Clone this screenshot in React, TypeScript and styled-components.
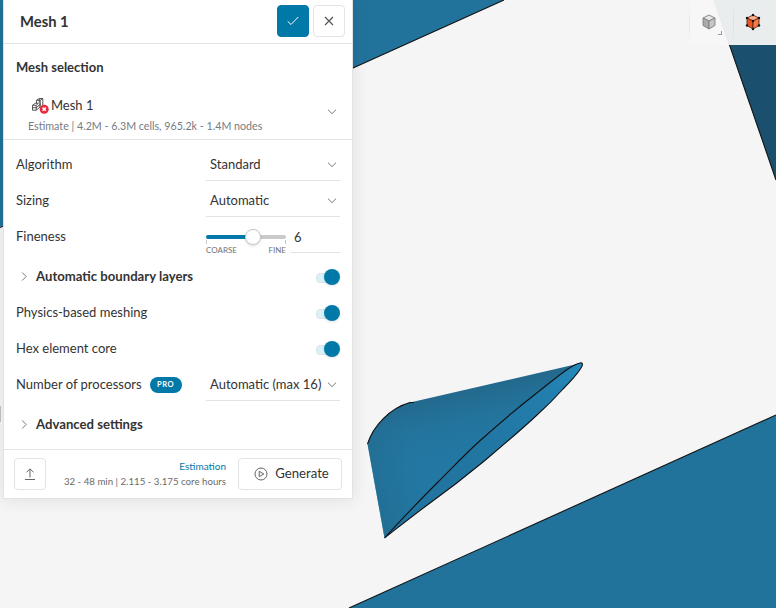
import React from "react";
import styled, { createGlobalStyle } from "styled-components";

const GlobalStyle = createGlobalStyle`
  * { box-sizing: border-box; }
  body { margin: 0; overflow: hidden; background: #f5f5f5; }
  button { font: inherit; padding: 0; color: inherit; }
  svg { flex: none; }
`;

const Viewport = styled.main`
  position: relative;
  width: 776px;
  height: 608px;
  overflow: hidden;
  padding-left: 3px;
  background: #f5f5f5;
  font-family: Lato, "Liberation Sans", sans-serif;
  color: #333;
`;

const SceneSvg = styled.svg`
  position: absolute;
  inset: 0;
`;

const EdgeHandle = styled.div`
  position: absolute;
  left: 0;
  top: 406px;
  width: 1px;
  height: 16px;
  background: #c4c4c4;
`;

const ViewTools = styled.div`
  position: absolute;
  top: 0;
  right: 0;
  width: 87px;
  height: 45px;
  display: flex;
  background: rgba(246, 246, 246, 0.94);
`;

const ViewTool = styled.button`
  position: relative;
  width: 44px;
  height: 45px;
  display: grid;
  place-items: center;
  padding: 0 3px 1px 0;
  border: 0;
  background: linear-gradient(rgba(0, 0, 0, 0), rgba(0, 0, 0, 0.06) 50%, rgba(0, 0, 0, 0)) 0 0 / 1px 100% no-repeat;
`;

const Panel = styled.section`
  position: relative;
  width: 350px;
  height: 499px;
  display: flex;
  flex-direction: column;
  background: #fff;
  border: 1px solid #e2e3e4;
  border-top: 0;
  box-shadow: 0 1px 16px rgba(0, 0, 0, 0.09);
`;

const Header = styled.header`
  flex: none;
  height: 44px;
  display: flex;
  align-items: center;
  gap: 4px;
  padding: 0 7px 2px 16px;
  border-bottom: 1px solid #e2e3e4;
`;

const Title = styled.h1`
  flex: 1;
  margin: 0;
  font-size: 14.8px;
  font-weight: 700;
`;

const SquareButton = styled.button<{ $primary?: boolean }>`
  flex: none;
  width: 32px;
  height: 32px;
  display: grid;
  place-items: center;
  border-radius: 4px;
  border: 1px solid ${(p) => (p.$primary ? "#0079a8" : "#e2e3e4")};
  background: ${(p) => (p.$primary ? "#0079a8" : "#fff")};
`;

const Selection = styled.section`
  flex: none;
  height: 96px;
  padding: 14px 12px 0 12px;
  border-bottom: 1px solid #e2e3e4;
`;

const SectionTitle = styled.h2`
  margin: 0;
  font-size: 13px;
  line-height: 18px;
  font-weight: 700;
`;

const MeshChoice = styled.div`
  display: flex;
  align-items: flex-start;
  justify-content: space-between;
  margin-top: 18px;
  padding: 0 3px 0 12px;
  height: 44px;

  > svg {
    margin-top: 12px;
  }
`;

const MeshName = styled.div`
  display: flex;
  align-items: center;
  height: 22px;
  padding-left: 3px;
  gap: 2px;
  font-size: 13px;
`;

const MeshEstimate = styled.div`
  height: 22px;
  line-height: 20px;
  font-size: 10.7px;
  color: #747c82;
`;

const Settings = styled.div`
  flex: 1;
  padding: 6px 12px 0;
`;

const Row = styled.div<{ $spaced?: boolean }>`
  display: flex;
  align-items: center;
  height: 36px;
  margin-top: ${(p) => (p.$spaced ? 4 : 0)}px;
`;

const Label = styled.div<{ $strong?: boolean }>`
  flex: 1;
  display: flex;
  align-items: center;
  font-size: ${(p) => (p.$strong ? 13.15 : 13)}px;
  font-weight: ${(p) => (p.$strong ? 700 : 400)};
  gap: 8px;
  white-space: nowrap;
`;

const Select = styled.div`
  width: 134px;
  height: 34px;
  display: flex;
  align-items: center;
  justify-content: space-between;
  padding: 0 3px 0 4px;
  border-bottom: 1px solid #e2e3e4;
  font-size: 13px;
  white-space: nowrap;
`;

const Slider = styled.div`
  width: 80px;
  height: 26px;
  margin: 12px 4px 0 0;
`;

const Track = styled.div`
  position: relative;
  height: 4px;
  margin-top: 6px;
  border-radius: 2px;
  background: linear-gradient(to right, #0079a8 47px, #cacaca 47px);
`;

const Thumb = styled.div`
  position: absolute;
  left: 39px;
  top: -6px;
  width: 16px;
  height: 16px;
  border: 1px solid #c8c8c8;
  border-radius: 50%;
  background: #fff;
  box-shadow: 0 1px 3px rgba(0, 0, 0, 0.14);
`;

const Ticks = styled.div`
  height: 4px;
  margin-top: 1px;
  border: solid #c8c8c8;
  border-width: 0 1px;
`;

const Ends = styled.div`
  display: flex;
  justify-content: space-between;
  margin-top: 1px;
  font-size: 8px;
  line-height: 10px;
  color: #717171;
`;

const NumberField = styled.div`
  width: 50px;
  height: 32px;
  margin-top: 2px;
  line-height: 33px;
  padding-left: 4px;
  border-bottom: 1px solid #e2e3e4;
  font-size: 13px;
`;

const Toggle = styled.div`
  width: 24px;
  height: 16px;
  display: flex;
  align-items: center;
  justify-content: flex-end;
  position: relative;
  margin-top: 2px;

  &::before {
    content: "";
    position: absolute;
    left: 0;
    top: 4px;
    width: 18px;
    height: 8px;
    border: 1px solid #dce4e6;
    border-radius: 4px;
    background: #d9f2fa;
  }
`;

const Knob = styled.div`
  position: relative;
  width: 16px;
  height: 16px;
  border-radius: 50%;
  background: #0079a8;
  box-shadow: 0 1px 3px rgba(0, 0, 0, 0.12);
`;

const Pro = styled.span`
  width: 32px;
  height: 16px;
  line-height: 16px;
  margin-top: 1px;
  border-radius: 8px;
  background: #0079a8;
  color: #fff;
  text-align: center;
  font-size: 7.5px;
  font-weight: 700;
  letter-spacing: 0.5px;
`;

const Footer = styled.footer`
  flex: none;
  height: 49px;
  display: flex;
  align-items: center;
  padding: 0 10px;
  border-top: 1px solid #e2e3e4;
`;

const Estimation = styled.div`
  flex: 1;
  padding-right: 12px;
  text-align: right;
  font-size: 9.7px;
  line-height: 15px;
  white-space: nowrap;
  color: #6b6b6b;
`;

const EstimationLink = styled.div`
  color: #0079a8;
  font-size: 10px;
`;

const Generate = styled.button`
  width: 104px;
  height: 32px;
  display: flex;
  align-items: center;
  justify-content: center;
  gap: 7px;
  border: 1px solid #e2e3e4;
  border-radius: 4px;
  background: #fff;
  font-size: 13.2px;
  line-height: 16px;
  padding: 0 0 2px 3px;

  svg {
    position: relative;
    top: 1px;
  }
`;

function Chevron({ right = false }: { right?: boolean }) {
  return (
    <svg width="10" height="10" viewBox="0 0 10 10" fill="none" stroke="#777">
      <path d={right ? "M3.2 1.5 7.2 5.5 3.2 9.5" : "M1 3.7 5 7.6 9 3.7"} />
    </svg>
  );
}

function MeshIcon() {
  return (
    <svg width="18" height="18" viewBox="0 0 18 18" fill="none" stroke="#444" strokeWidth=".9">
      <path d="M5.5 4.3 8.3 2.5H11.8V9.8L10 11.7M5.5 4.3H9.2L11.8 2.5M9.2 4.3V10.5M5.5 4.3V7.3M8.3 2.5V6.8M1.5 9.3 4.2 7.3H7.4L5.2 9.3H1.5V14.2H5.2V9.3M5.2 14.2 9 11V6.9M1.5 11.7H5.2L9 8.6" />
      <circle cx="13.2" cy="13.2" r="4.5" fill="#e6293e" stroke="none" />
      <path d="m11.6 11.6 3.2 3.2m0-3.2-3.2 3.2" stroke="#fff" strokeWidth="1.6" />
    </svg>
  );
}

function Cube({ selected = false }: { selected?: boolean }) {
  const faces = selected ? ["#ffaf87", "#e95420", "#f47b49"] : ["#e5e5e5", "#aaa", "#c5c5c5"];
  const corners = [[8, 1], [2, 4], [14, 4], [8, 7], [2, 11.5], [14, 11.5], [8, 15]];
  return (
    <svg width="18" height="18" viewBox="-1 -1 18 18" stroke={selected ? "#612a17" : "#808080"} strokeWidth=".9" strokeLinejoin="round">
      <path d="M8 1 14 4 8 7 2 4Z" fill={faces[0]} />
      <path d="M2 4 8 7V15L2 11.5Z" fill={faces[1]} />
      <path d="M14 4 8 7V15L14 11.5Z" fill={faces[2]} />
      {selected && corners.map(([x, y]) => <circle key={`${x}-${y}`} cx={x} cy={y} r="1.2" fill="#111" stroke="none" />)}
    </svg>
  );
}

const FLANK = "M384.5 538C400 521 418 502 438 482 453 467 466 453 483 438 501 422 520 406 538 392 555 379 569 366 580 363 583 362 583 365 581 368 576 376 570 382 563 389 555 398 547 406 537 415 520 431 502 446 483 462 466 476 448 490 430 503 415 514 400 526 384.5 538Z";

function Scene() {
  return (
    <SceneSvg width="776" height="608" viewBox="0 0 776 608">
      <defs>
        <linearGradient id="cone" gradientUnits="userSpaceOnUse" x1="465" y1="390" x2="478" y2="450">
          <stop stopColor="#23698d" />
          <stop offset=".5" stopColor="#23749d" />
          <stop offset="1" stopColor="#2278a3" />
        </linearGradient>
        <linearGradient id="coneLeft" gradientUnits="userSpaceOnUse" x1="370" y1="495" x2="420" y2="482">
          <stop stopColor="#236a8e" stopOpacity=".7" />
          <stop offset="1" stopColor="#236a8e" stopOpacity="0" />
        </linearGradient>
        <linearGradient id="flank" x1="1" y1="0" x2="0" y2="1">
          <stop stopColor="#258abb" />
          <stop offset=".18" stopColor="#227ead" />
          <stop offset=".5" stopColor="#2176a2" />
          <stop offset="1" stopColor="#22739e" />
        </linearGradient>
      </defs>
      <path d="M0 0H504L353 68 0 227Z" fill="#22739c" />
      <path d="M504 0 353 68 0 227.5" fill="none" stroke="#111" strokeWidth="1.1" />
      <path d="M714 0 776 180V0Z" fill="#1a506d" />
      <path d="M714 0 776 180" stroke="#111" strokeWidth="1.1" />
      <path d="M349 608 776 415V608Z" fill="#22739c" />
      <path d="M349 608 776 415" stroke="#111" strokeWidth="1.1" />
      <path d="M367.5 444C373 426 390 408 410 402.5L581.5 363 483 445 384.5 538Z" fill="url(#cone)" />
      <path d="M367.5 444C373 426 390 408 410 402.5L483 445 384.5 538Z" fill="url(#coneLeft)" />
      <path d={FLANK} fill="url(#flank)" />
      <g fill="none" stroke="#111" strokeWidth="1.1">
        <path d="M367.5 444C373 426 390 408 410 402.5H414" />
        <path d={FLANK} />
      </g>
    </SceneSvg>
  );
}

function SelectRow({ label, value, pro = false }: { label: string; value: string; pro?: boolean }) {
  return (
    <Row>
      <Label>{label}{pro && <Pro>PRO</Pro>}</Label>
      <Select>{value}<Chevron /></Select>
    </Row>
  );
}

function ToggleRow({ label, group = false }: { label: string; group?: boolean }) {
  return (
    <Row $spaced={group}>
      <Label $strong={group}>{group && <GroupChevron><Chevron right /></GroupChevron>}{label}</Label>
      <Toggle role="switch" aria-checked="true"><Knob /></Toggle>
    </Row>
  );
}

const GroupChevron = styled.span`
  width: 12px;
  display: flex;
  padding-left: 3px;
`;

const DropCorner = styled.span`
  position: absolute;
  right: 11px;
  bottom: 10px;
  width: 4px;
  height: 4px;
  border: solid #999;
  border-width: 0 1px 1px 0;
`;

export default function App() {
  return (
    <>
      <GlobalStyle />
      <Viewport>
        <Scene />
        <EdgeHandle />
        <ViewTools>
          <ViewTool aria-label="Display mode"><Cube /><DropCorner /></ViewTool>
          <ViewTool aria-label="Volume selection"><Cube selected /></ViewTool>
        </ViewTools>
        <Panel>
          <Header>
            <Title>Mesh 1</Title>
            <SquareButton $primary aria-label="Apply">
              <svg width="12" height="10" viewBox="0 0 12 10" fill="none" stroke="#fff"><path d="M.7 5.3 4 8.5 11.3 1" /></svg>
            </SquareButton>
            <SquareButton aria-label="Close">
              <svg width="10" height="10" viewBox="0 0 10 10" fill="none" stroke="#555" strokeWidth="1.2"><path d="m1 1 8 8m0-8L1 9" /></svg>
            </SquareButton>
          </Header>
          <Selection>
            <SectionTitle>Mesh selection</SectionTitle>
            <MeshChoice>
              <div>
                <MeshName><MeshIcon />Mesh 1</MeshName>
                <MeshEstimate>Estimate | 4.2M - 6.3M cells, 965.2k - 1.4M nodes</MeshEstimate>
              </div>
              <Chevron />
            </MeshChoice>
          </Selection>
          <Settings>
            <SelectRow label="Algorithm" value="Standard" />
            <SelectRow label="Sizing" value="Automatic" />
            <Row>
              <Label>Fineness</Label>
              <Slider>
                <Track><Thumb /></Track>
                <Ticks />
                <Ends><span>COARSE</span><span>FINE</span></Ends>
              </Slider>
              <NumberField>6</NumberField>
            </Row>
            <ToggleRow group label="Automatic boundary layers" />
            <ToggleRow label="Physics-based meshing" />
            <ToggleRow label="Hex element core" />
            <SelectRow label="Number of processors" value="Automatic (max 16)" pro />
            <Row $spaced>
              <Label $strong><GroupChevron><Chevron right /></GroupChevron>Advanced settings</Label>
            </Row>
          </Settings>
          <Footer>
            <SquareButton aria-label="Export">
              <svg width="12" height="14" viewBox="0 0 12 14" fill="none" stroke="#666"><path d="M6 10.5V2M2.5 5.3 6 1.8 9.5 5.3M1 12.5H11" /></svg>
            </SquareButton>
            <Estimation>
              <EstimationLink>Estimation</EstimationLink>
              32 - 48 min | 2.115 - 3.175 core hours
            </Estimation>
            <Generate>
              <svg width="14" height="14" viewBox="0 0 14 14" fill="none" stroke="#666"><circle cx="7" cy="7" r="6" /><path d="M5.2 4.3 9.8 7 5.2 9.7Z" /></svg>
              Generate
            </Generate>
          </Footer>
        </Panel>
      </Viewport>
    </>
  );
}
